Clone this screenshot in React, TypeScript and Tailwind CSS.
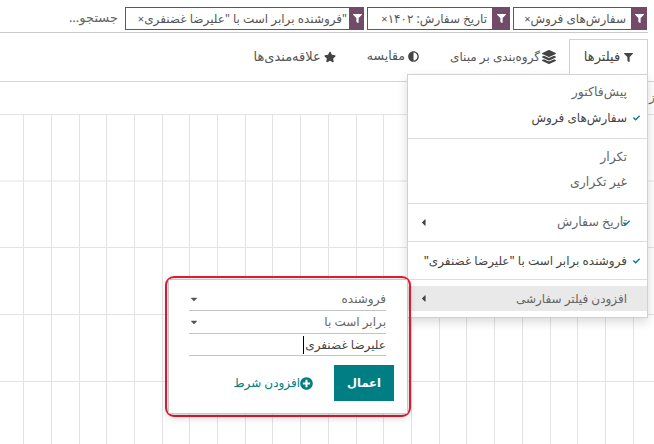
import { FaFilter, FaLayerGroup, FaAdjust, FaStar, FaPlusCircle, FaCaretLeft, FaCaretDown, FaCheck } from "react-icons/fa"

const font = { fontFamily: '"Noto Sans", "DejaVu Sans", sans-serif' }

const facets = [
  { label: '"فروشنده برابر است با "علیرضا غضنفری', box: "w-[225px] pr-[2px]", tag: "w-[14px]" },
  { label: "تاریخ سفارش: ۱۴۰۲", box: "w-[126px] pr-[5px]", tag: "w-[17px]" },
  { label: "سفارش‌های فروش", box: "w-[119px] pr-[5px]", tag: "w-[15px]" },
]

const gridX = [23, 51, 79, 106, 134, 162, 189, 217, 245, 272, 300, 328, 356, 383, 411, 439, 466, 494, 522, 550, 577, 605, 633]
const gridY = [0.5, 67, 133.5, 200.5, 267.5]

function Facet({ label, box, tag }: { label: string; box: string; tag: string }) {
  return (
    <div className="flex h-[23px] shrink-0" dir="ltr">
      <div className={`${box} h-full flex items-center justify-end border border-[#714b67] bg-white text-[12px]`}>
        <span dir="rtl" className="text-[#555555] whitespace-nowrap leading-none">
          {label}
          <span className="text-[11px]">×</span>
        </span>
      </div>
      <div className={`${tag} bg-[#714b67] flex items-center justify-center`}>
        <FaFilter className="text-white text-[9px]" />
      </div>
    </div>
  )
}

function MenuItem({ label, checked, arrow, bold, className, checkClass }: { label: string; checked?: boolean; arrow?: boolean; bold?: boolean; className?: string; checkClass?: string }) {
  return (
    <div className={`relative flex items-center justify-between pr-[20px] pl-[10px] ${bold ? "text-[12px] font-medium text-[#444444]" : "text-[#666666]"} ${className ?? ""}`}>
      <span className="whitespace-nowrap">{label}</span>
      {arrow && <FaCaretLeft className="text-[#444] text-[11px]" />}
      {checked && <FaCheck className={`text-[#017e84] text-[7px] absolute top-1/2 -translate-y-1/2 ${checkClass ?? "right-[7px]"}`} />}
    </div>
  )
}

export default function App() {
  return (
    <div className="relative w-[654px] h-[444px] overflow-hidden bg-white flex flex-col" style={font}>
      {/* Search bar */}
      <div className="h-[33px] w-[648px] shrink-0 border-b border-[#c9c9d0] flex flex-row-reverse items-start pt-[7px] pr-[1px] gap-[3px]" dir="ltr">
        {[...facets].reverse().map((f) => (
          <Facet key={f.label} label={f.label} box={f.box} tag={f.tag} />
        ))}
        <span dir="rtl" className="mr-[4px] text-[13px] text-[#666] leading-[20px] whitespace-nowrap">جستجو...</span>
      </div>

      {/* Tabs */}
      <div className="h-[49px] shrink-0 border-b border-[#d4d4d4] pt-[6px] flex flex-row-reverse pr-[6px]" dir="ltr">
        <div className="w-[79px] h-[35px] border border-[#d0d0d8] border-b-0 bg-white flex items-center justify-center gap-[4px] text-[13px] font-medium text-[#444] relative z-10" dir="rtl">
          <FaFilter className="text-[#444] text-[9px]" />
          <span>فیلترها</span>
        </div>
        <div className="flex flex-row-reverse h-[35px] items-center gap-[31px] pr-[13px] text-[12.5px] text-[#555]">
          <div className="flex items-center gap-[2px]" dir="rtl">
            <FaLayerGroup className="text-[#444] text-[14px]" />
            <span className="whitespace-nowrap text-[12px]">گروه‌بندی بر مبنای</span>
          </div>
          <div className="flex items-center gap-[3px]" dir="rtl">
            <FaAdjust className="text-[#444] text-[11px]" />
            <span>مقایسه</span>
          </div>
          <div className="flex items-center gap-[3px]" dir="rtl">
            <FaStar className="text-[#444] text-[12px]" />
            <span className="whitespace-nowrap text-[13px]">علاقه‌مندی‌ها</span>
          </div>
        </div>
      </div>

      {/* Chart grid */}
      <div className="flex-1 pt-[32px] bg-white">
        <svg width="654" height="330" className="block">
          {gridX.map((x) => (
            <line key={x} x1={x + 0.5} x2={x + 0.5} y1="0" y2="330" stroke="#e3e3e3" />
          ))}
          {gridY.map((y) => (
            <line key={y} x1="0" x2="654" y1={y} y2={y} stroke="#e3e3e3" />
          ))}
        </svg>
      </div>

      <span dir="rtl" className="absolute left-[649px] top-[88px] text-[12px] text-[#666]">از</span>

      {/* Filter dropdown */}
      <div dir="rtl" className="absolute left-[407px] top-[74px] w-[241px] h-[244px] bg-white border border-[#d0d0d8] shadow-[0_4px_10px_rgba(0,0,0,0.15)] flex flex-col text-[12.5px]">
        <div className="pt-[5px] pb-[8px] flex flex-col">
          <MenuItem label="پیش‌فاکتور" className="h-[25px]" />
          <MenuItem label="سفارش‌های فروش" bold checked className="h-[25px]" />
        </div>
        <div className="border-t border-[#dcdce2] pt-[6px] pb-[8px] flex flex-col">
          <MenuItem label="تکرار" className="h-[25px]" />
          <MenuItem label="غیر تکراری" className="h-[25px]" />
        </div>
        <div className="border-t border-[#dcdce2] py-[5px]">
          <MenuItem label="تاریخ سفارش" arrow checked checkClass="right-[17px]" className="h-[27px]" />
        </div>
        <div className="border-t border-[#dcdce2] py-[6px]">
          <MenuItem label='فروشنده برابر است با "علیرضا غضنفری"' bold checked className="h-[25px]" />
        </div>
        <div className="border-t border-[#dcdce2] pt-[6px]">
          <MenuItem label="افزودن فیلتر سفارشی" arrow className="h-[25px] bg-[#e9e9e9] text-[12px]" />
        </div>
      </div>

      {/* Custom filter popover, with its red highlight */}
      <div className="absolute left-[165px] top-[276px] w-[246px] h-[141px] rounded-[9px] border-[2px] border-[#e81c2e] p-[1px] z-20">
        <div dir="rtl" className="w-full h-full bg-white border border-[#c8c8d0] rounded-[2px] shadow-[0_3px_8px_rgba(0,0,0,0.2)] pt-[8px] pl-[20px] pr-[21px]">
          <div className="h-[23px] flex items-center justify-between border-b border-[#c4c4c4] text-[12px] text-[#666]">
            <span>فروشنده</span>
            <FaCaretDown className="text-[#555] text-[10px]" />
          </div>
          <div className="h-[23px] flex items-center justify-between border-b border-[#c4c4c4] text-[12px] text-[#666]">
            <span className="whitespace-nowrap">برابر است با</span>
            <FaCaretDown className="text-[#555] text-[10px]" />
          </div>
          <div className="h-[22px] flex items-center border-b border-[#c4c4c4] text-[12px] text-[#444]">
            <span className="whitespace-nowrap border-l border-black pl-[1px] leading-[18px]">علیرضا غضنفری</span>
          </div>
          <div className="mt-[9px] -mr-[8px] flex items-center gap-[21px]">
            <button className="w-[60px] h-[36px] bg-[#017e84] text-white text-[11.5px] font-bold">اعمال</button>
            <span className="flex items-center text-[12px] font-medium text-[#017e84] whitespace-nowrap">
              <FaPlusCircle className="text-[#017e84] text-[13px]" />
              افزودن شرط
            </span>
          </div>
        </div>
      </div>
    </div>
  )
}
